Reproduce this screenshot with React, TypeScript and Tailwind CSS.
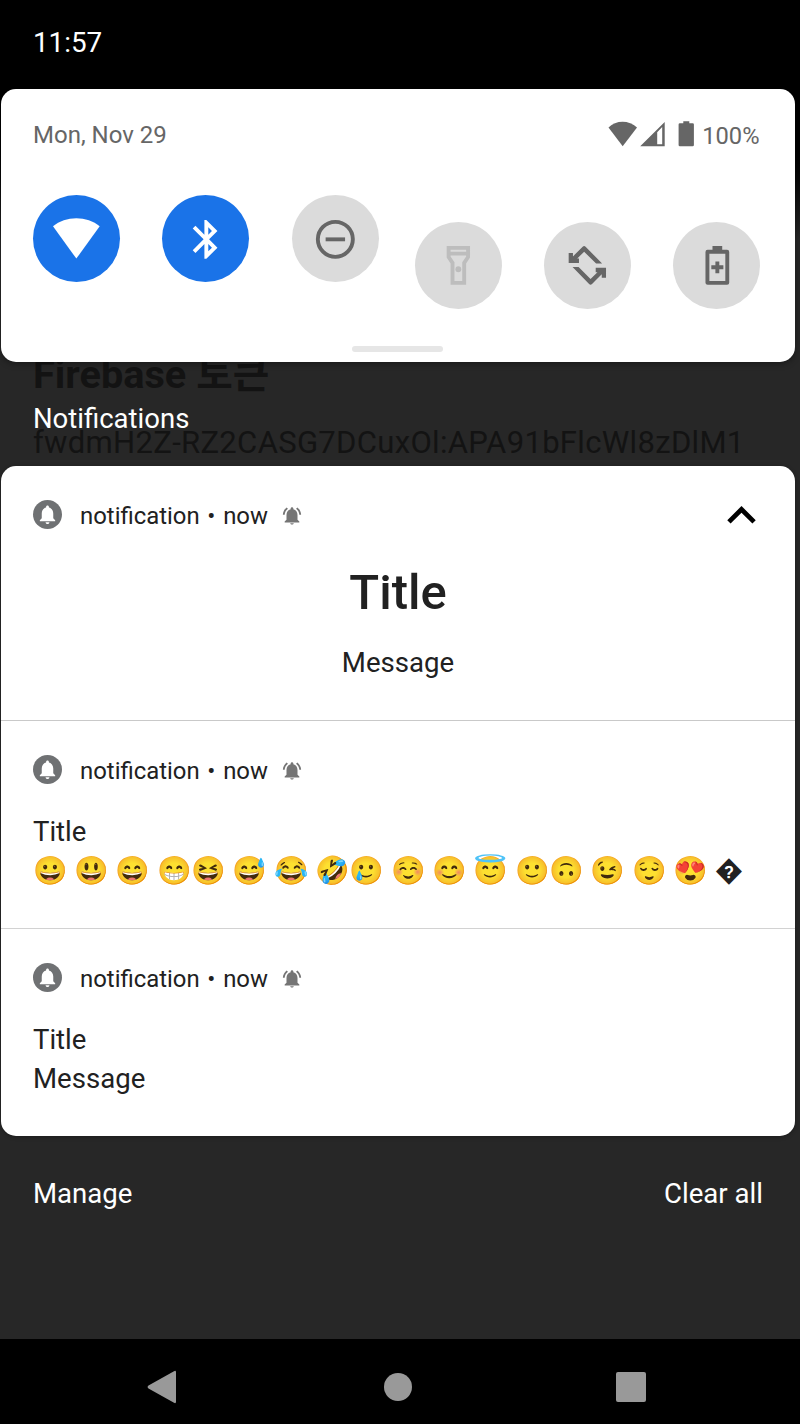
import type { ReactNode } from "react";

const BELL_BODY =
  "M18 16v-5c0-3.07-1.64-5.64-4.5-6.32V4c0-.83-.67-1.5-1.5-1.5s-1.5.67-1.5 1.5v.68C7.63 5.36 6 7.92 6 11v5l-2 2v1h16v-1l-2-2z";
const CLAPPER = "M12 22c1.1 0 2-.9 2-2h-4c0 1.1.89 2 2 2z";
const CLAPPER_SHORT = "M12 21.4c1 0 1.8-.6 2-1.5h-4c.2.9 1 1.5 2 1.5z";
const BELL_WAVES =
  "M7.58 4.08L6.15 2.65C3.75 4.48 2.17 7.3 2.03 10.5h2c.15-2.65 1.51-4.97 3.55-6.42zm12.39 6.42h2c-.15-3.2-1.73-6.02-4.12-7.85l-1.42 1.43c2.02 1.45 3.39 3.77 3.54 6.42z";
const ROTATE_ARROW = "M9.6 2.4q.75-.7 1.5 0L19.6 11.1h-3.1L10.35 5 6.8 8.500h.9v2.300H2.4V5.6h2.200v1.800z";
const CARD = "ml-px w-[794px] rounded-[15px] bg-white";

function Tile({ tone, children }: { tone: string; children: ReactNode }) {
  return (
    <div className={`flex size-[87px] items-center justify-center rounded-full ${tone}`}>
      <svg viewBox="0 0 24 24" className="size-[46.7px] overflow-visible" fill="currentColor">
        {children}
      </svg>
    </div>
  );
}

function StatusIcons() {
  return (
    <svg viewBox="0 0 88 28" className="h-7 w-[88px]" fill="#666">
      <path d="M0.5 7.5C8 -0.1 21 -0.1 29 7.5L14.7 26.2z" />
      <path fillRule="evenodd" d="M56.7 2v24.2H32.2zM49.2 12.3v12h5V7z" />
      <path d="M75.3 1.2h6v2h3.3q1.3 0 1.3 1.3v20.4q0 1.3-1.3 1.3h-12.7q-1.3 0-1.3-1.3v-20.4q0-1.3 1.3-1.3h3.4z" />
    </svg>
  );
}

function Header({ expanded = false }: { expanded?: boolean }) {
  return (
    <div className="flex h-[30px] items-center">
      <div className="-mt-px flex size-[29px] shrink-0 items-center justify-center rounded-full bg-[#6f7173]">
        <svg viewBox="0 0 24 24" className="size-[23px]" fill="#fff">
          <path d={BELL_BODY} />
          <path d={CLAPPER} />
        </svg>
      </div>
      <span className="ml-[18px] mt-px w-[188px] whitespace-nowrap text-[23.9px] leading-[30px] [word-spacing:1.8px]">
        notification • now
      </span>
      <svg viewBox="0 0 24 24" className="ml-[13.4px] mt-px size-[22px]" fill="#757575">
        <path d={BELL_BODY} />
        <path d={CLAPPER_SHORT} />
        <path d={BELL_WAVES} />
      </svg>
      {expanded && (
        <svg viewBox="0 0 24 24" className="-mb-4 -mr-[6.5px] ml-auto mt-[-15px] size-[57px]" fill="#000">
          <path d="M12 8l-6 6 1.41 1.41L12 10.83l4.59 4.58L18 14z" />
        </svg>
      )}
    </div>
  );
}

export default function App() {
  return (
    <div className="relative flex h-[1424px] w-[800px] flex-col overflow-hidden bg-[#272727] font-['Roboto','Noto_Sans_CJK_KR',sans-serif] text-[#212121]">
      <div className="absolute inset-x-0 top-0 h-[240px] bg-linear-to-b from-black from-50% to-[#272727]" />
      <div className="absolute left-[33px] top-[352px] whitespace-nowrap text-[#131313]">
        <div className="text-[39.7px] font-bold leading-[46px]">Firebase 토큰</div>
        <div className="mt-[23px] text-[31.05px] leading-[44px] tracking-[0.3px]">fwdmH2Z-RZ2CASG7DCuxOl:APA91bFlcWl8zDlM1</div>
      </div>

      <div className="relative h-[88.5px] pl-[33px] pt-[26px] text-[27.8px] leading-[34px] text-white">11:57</div>

      <section className={`${CARD} relative flex h-[273.5px] flex-col shadow-[0_2px_6px_rgba(0,0,0,0.35)]`}>
        <div className="mt-[31.5px] flex h-[28px] items-center justify-between pl-8 pr-[35.5px] text-[24px] text-[#666]">
          <span className="mt-[1px]">Mon, Nov 29</span>
          <div className="flex items-center">
            <StatusIcons />
            <span className="ml-[6.5px] mt-[3px] text-[23.7px] leading-[28px]">100%</span>
          </div>
        </div>
        <div className="mt-[47.4px] flex justify-between pl-[32.2px] pr-[34.6px]">
          <div className="flex gap-[42.3px]">
            <Tile tone="bg-[#1a73e8] text-white">
              <path d="M0 5.3C6.4 -0.2 17.6 -0.2 24 5.3L12 21.9z" />
            </Tile>
            <Tile tone="bg-[#1a73e8] text-white">
              <path d="M17.71 7.71L12 2h-1v7.59L6.41 5 5 6.41 10.59 12 5 17.59 6.41 19 11 14.41V22h1l5.71-5.71-4.3-4.29 4.3-4.29zM13 5.83l1.88 1.88L13 9.59V5.83zm1.88 10.46L13 18.17v-3.76l1.88 1.88z" />
            </Tile>
            <Tile tone="bg-[#dbdbdb] text-[#666]">
              <circle cx="12" cy="12" r="9" fill="none" stroke="currentColor" strokeWidth="2" />
              <path d="M7 11h10v2H7z" />
            </Tile>
          </div>
          <div className="mt-[26.3px] flex gap-[42.3px]">
            <Tile tone="bg-[#dbdbdb] text-[#bdbdbd]">
              <path fillRule="evenodd" d="M6 2h12v6l-2 3v11H8V11L6 8zM8 4v1h8V4zM8 7v.4l2 3V20h4v-9.6l2-3V7z" />
              <circle cx="12" cy="14" r="1.5" />
            </Tile>
            <Tile tone="bg-[#dbdbdb] text-[#666]">
              <path d={ROTATE_ARROW} />
              <path transform="rotate(180 12 12)" d={ROTATE_ARROW} />
            </Tile>
            <Tile tone="bg-[#dbdbdb] text-[#666]">
              <path fillRule="evenodd" d="M9.5 2h5v2H17q1.1 0 1.1 1.1v15.8q0 1.1-1.1 1.1H7q-1.1 0-1.1-1.1V5.1Q5.9 4 7 4h2.5zM7.9 6v14h8.2V6z" />
              <path d="M11 10h2v2h2.1v2H13v2.1h-2V14H8.9v-2H11z" />
            </Tile>
          </div>
        </div>
        <div className="ml-[351px] mt-[37px] h-[6px] w-[91px] rounded-full bg-[#e6e6e6]" />
      </section>

      <h2 className="relative h-[104px] pl-[33px] pt-[40px] text-[27.5px] leading-[34px] text-white">Notifications</h2>

      <section className={`${CARD} relative h-[670px] shadow-[0_1px_4px_rgba(0,0,0,0.3)]`}>
        <article className="h-[255px] border-b border-[#c9c9c9] px-8 pt-[34px]">
          <Header expanded />
          <h3 className="mt-[33px] text-center text-[49px] font-medium leading-[60px]">Title</h3>
          <p className="mt-[22px] text-center text-[27.6px] leading-[36px]">Message</p>
        </article>
        <article className="h-[208px] border-b border-[#d2d2d2] px-8 pt-[34px]">
          <Header />
          <h3 className="mt-[29px] text-[27.5px] leading-[36px]">Title</h3>
          <p className="mt-[3px] whitespace-nowrap font-['Roboto','Noto_Color_Emoji',sans-serif] text-[27.68px] leading-[36px]">
            😀 😃 😄 😁😆 😅 😂 🤣🥲 ☺️ 😊 😇 🙂🙃 😉 😌 😍 �
          </p>
        </article>
        <article className="px-8 pt-[34px]">
          <Header />
          <h3 className="mt-[29px] text-[27.5px] leading-[36px]">Title</h3>
          <p className="mt-[3px] text-[27.6px] leading-[36px]">Message</p>
        </article>
      </section>

      <div className="relative mt-[41px] flex justify-between pl-[33px] pr-[37px] text-[27.6px] leading-[34px] text-white">
        <button>Manage</button>
        <button>Clear all</button>
      </div>

      <nav className="relative mt-auto flex h-[85px] items-center bg-black pt-[10px]">
        <svg viewBox="0 0 30 34" className="ml-[147px] h-[34px] w-[30px]" fill="#999">
          <path d="M1.5 15.6L27 1.2q2-1 2 1v29.6q0 2-2 1L1.5 18.4q-1.8-1.4 0-2.8z" />
        </svg>
        <div className="ml-[207px] size-[28px] rounded-full bg-[#999]" />
        <div className="ml-[204px] size-[30px] rounded-[2px] bg-[#999]" />
      </nav>
    </div>
  );
}
